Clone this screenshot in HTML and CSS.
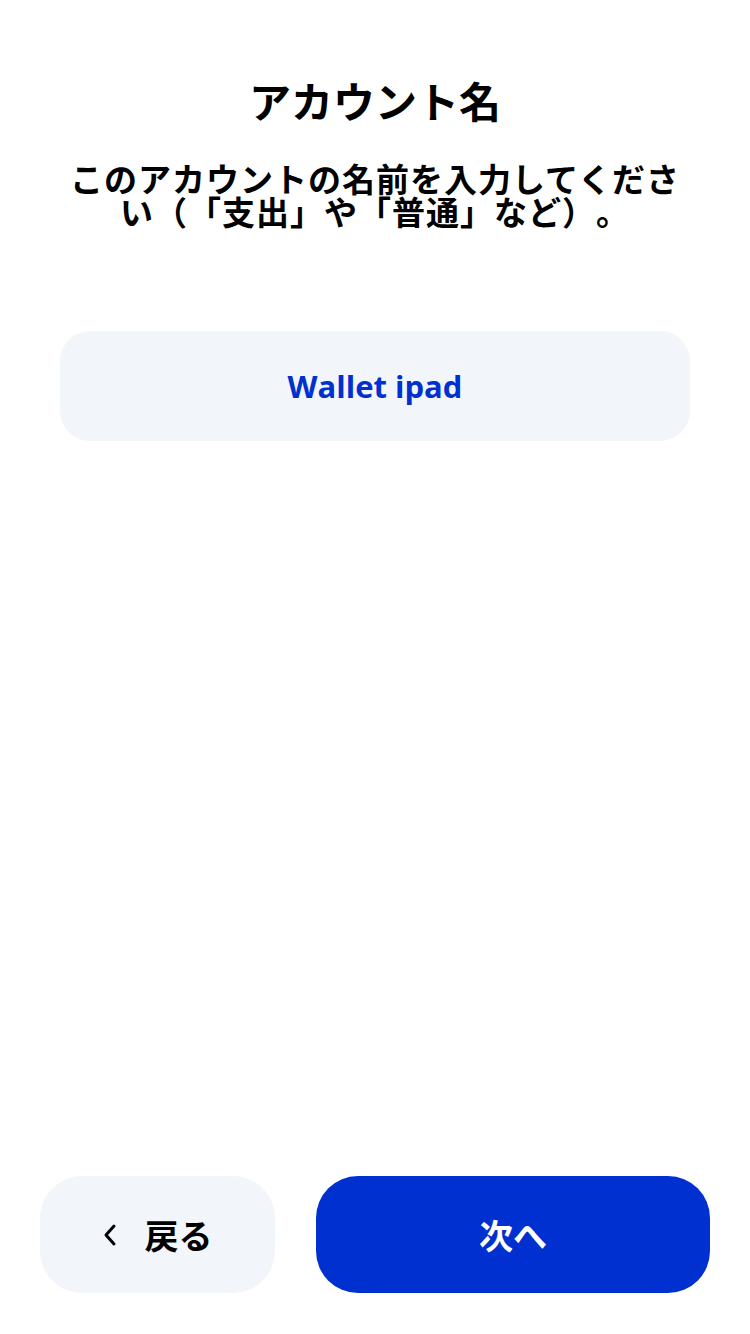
FILE: index.html
```html
<!DOCTYPE html>
<html lang="ja">
<head>
<meta charset="utf-8">
<link rel="stylesheet" href="styles.css">
</head>
<body>
<div class="screen">
  <header class="head">
    <h1 class="title">アカウント名</h1>
    <p class="subtitle">このアカウントの名前を入力してください（「支出」や「普通」など）。</p>
  </header>
  <div class="field">
    <span class="field-text">Wallet ipad</span>
  </div>
  <div class="spacer"></div>
  <footer class="actions">
    <button class="btn btn-back">
      <svg class="chev" width="14" height="24" viewBox="0 0 14 24"><path d="M11 3 L3 12 L11 21" fill="none" stroke="#000" stroke-width="3" stroke-linecap="round" stroke-linejoin="round"/></svg>
      <span>戻る</span>
    </button>
    <button class="btn btn-next">次へ</button>
  </footer>
</div>
</body>
</html>
```
FILE: styles.css
```css
* { box-sizing: border-box; }
html, body { margin: 0; padding: 0; background: #fff; }
body {
  font-family: "Noto Sans CJK JP", "Noto Sans", sans-serif;
  color: #000;
}
.screen {
  width: 750px;
  height: 1334px;
  display: flex;
  flex-direction: column;
}
.head {
  padding: 72px 60px 0;
  text-align: center;
}
.title {
  margin: 0;
  font-size: 42px;
  font-weight: 700;
  line-height: 56px;
}
.subtitle {
  margin: 34px 0 0;
  font-size: 33px;
  font-weight: 700;
  line-height: 33px;
  letter-spacing: 1px;
  text-spacing-trim: space-all;
}
.field {
  margin: 103px 60px 0;
  height: 110px;
  border-radius: 30px;
  background: #f2f5fa;
  display: flex;
  align-items: center;
  justify-content: center;
}
.field-text {
  font-family: "Open Sans", "Noto Sans", sans-serif;
  font-weight: 700;
  font-size: 31px;
  color: #0031d0;
  letter-spacing: 0;
}
.spacer { flex: 1; }
.actions {
  display: flex;
  gap: 41px;
  padding: 0 40px 41px;
}
.btn {
  border: none;
  height: 117px;
  border-radius: 42px;
  font-family: "Noto Sans CJK JP", sans-serif;
  font-weight: 700;
  font-size: 34px;
  display: flex;
  align-items: center;
  justify-content: center;
  padding: 0;
}
.btn-back {
  width: 235px;
  background: #f2f5fa;
  color: #000;
  gap: 28px;
}
.chev { display: block; }
.btn-next {
  flex: 1;
  background: #0030cf;
  color: #fff;
}
```
